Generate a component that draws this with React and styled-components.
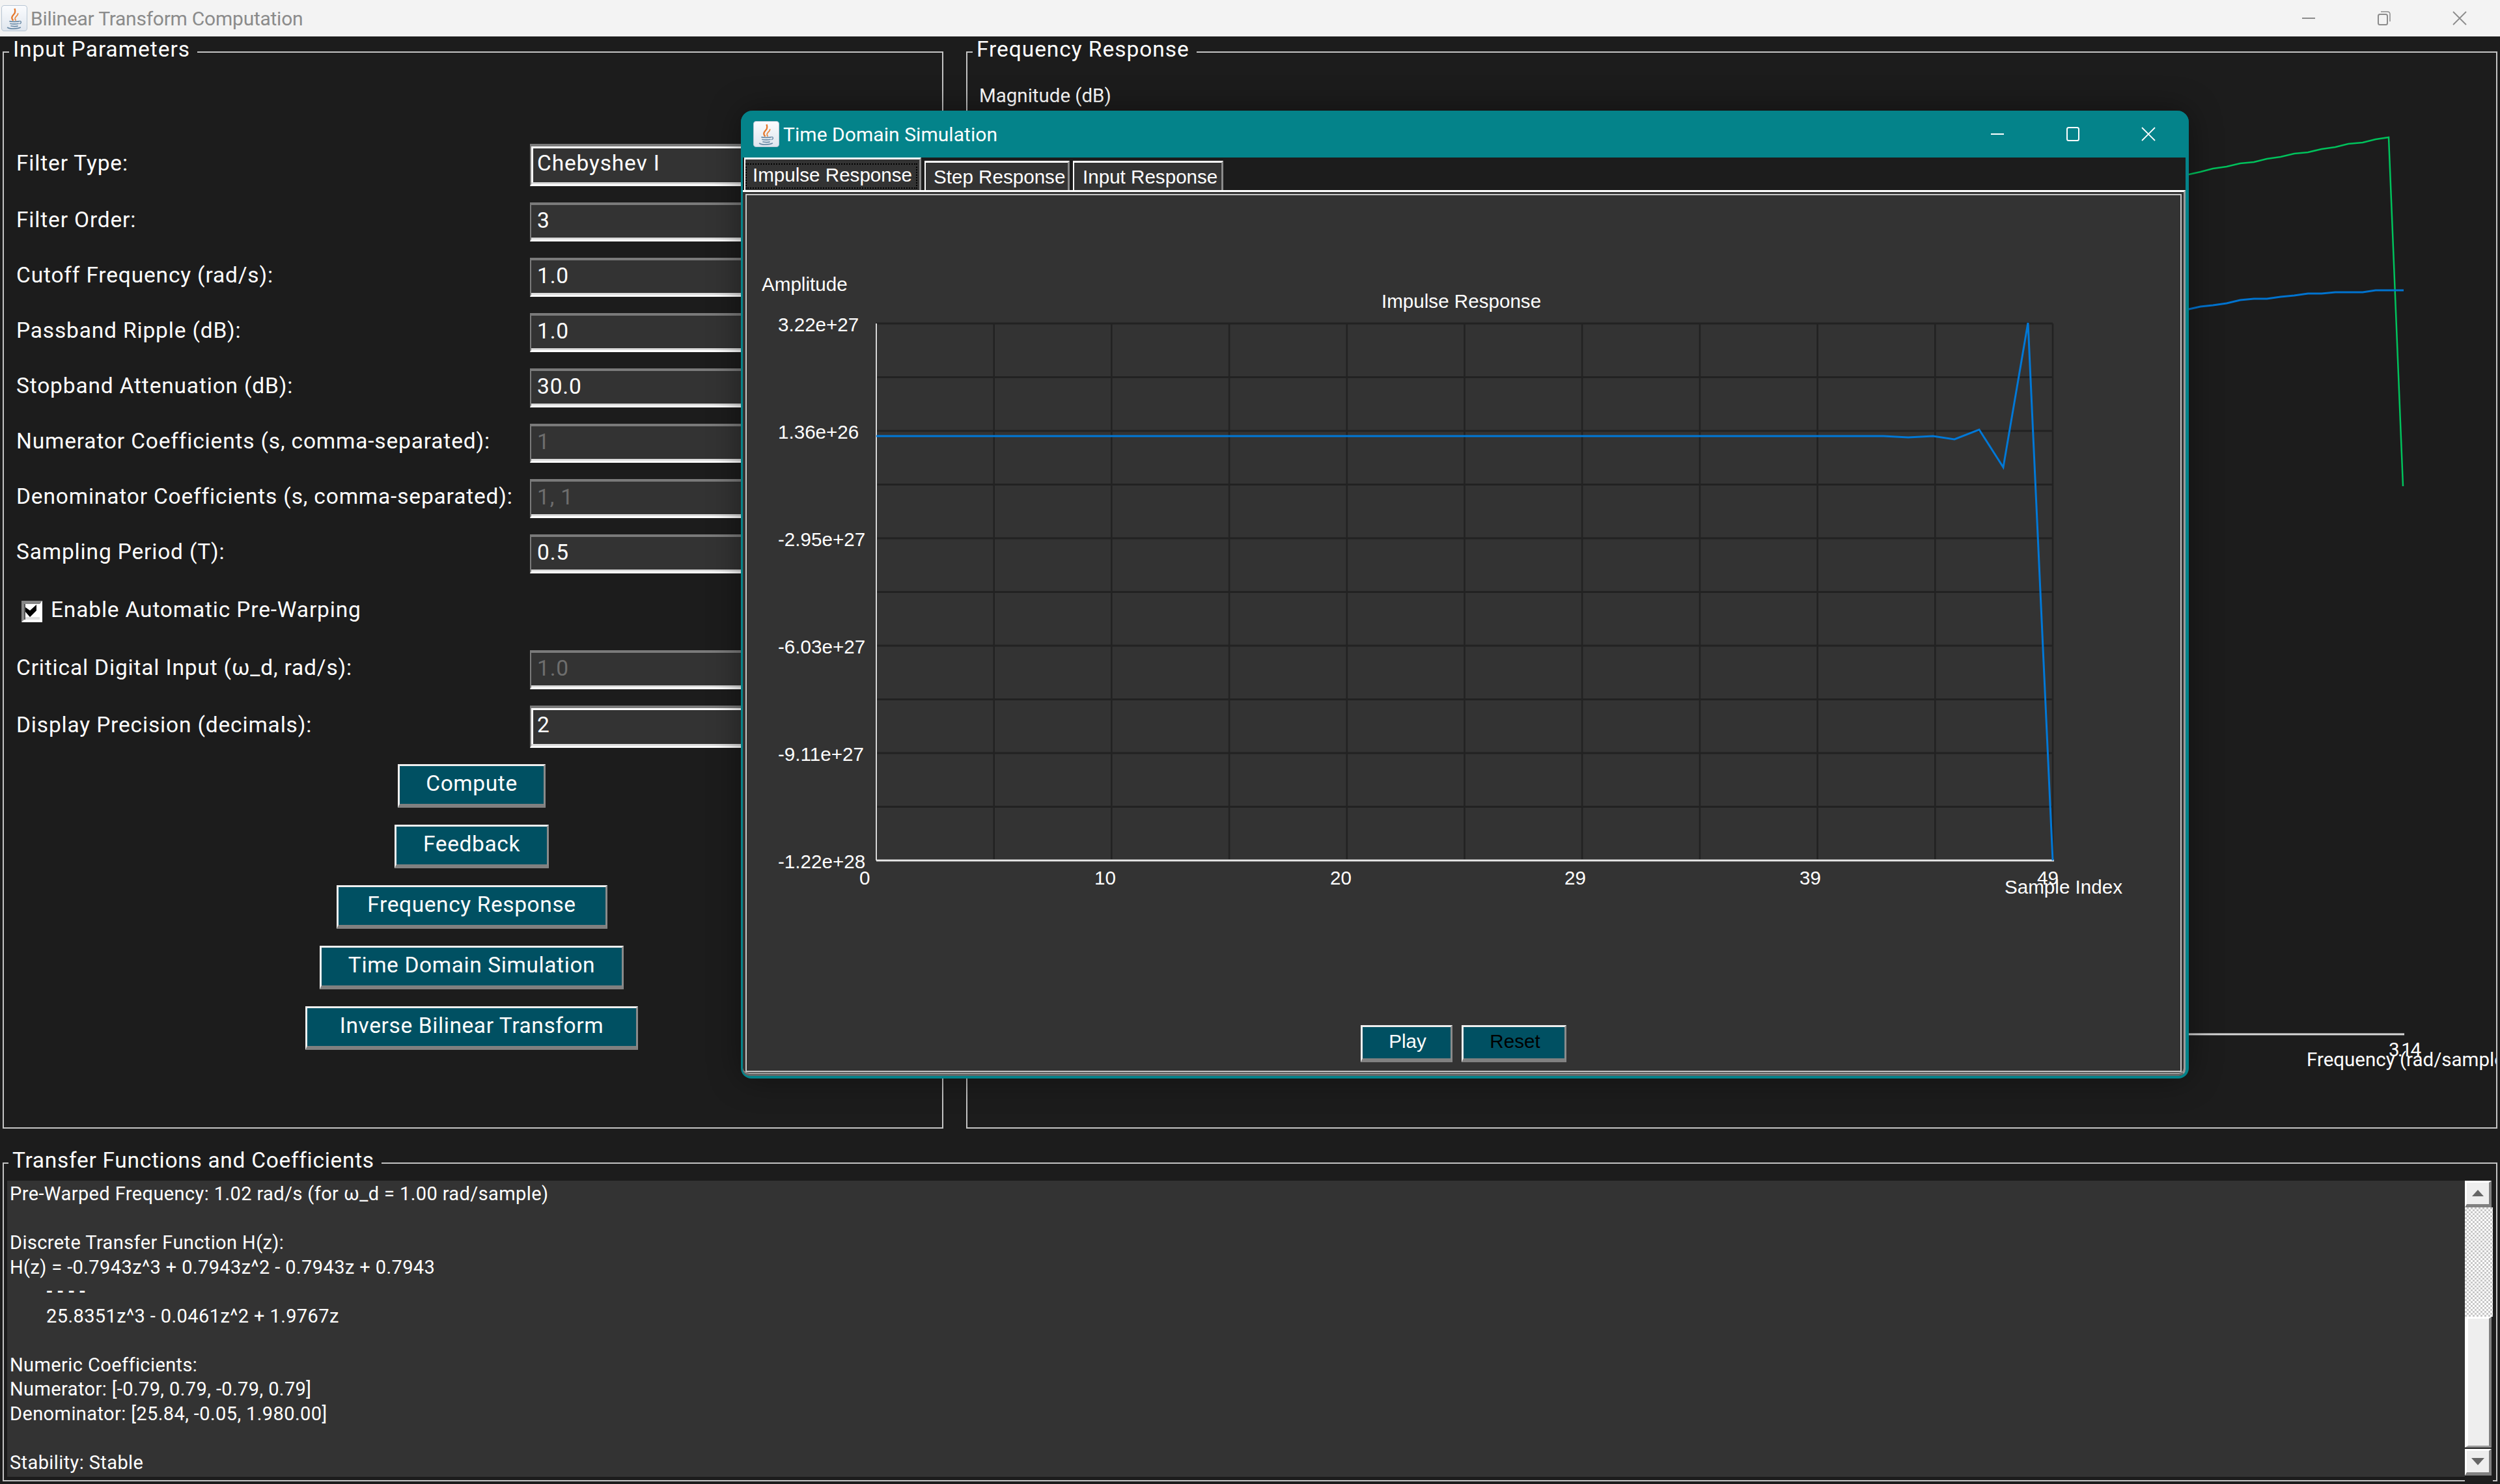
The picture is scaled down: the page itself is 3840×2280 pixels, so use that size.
import React from 'react';
import styled, {createGlobalStyle} from 'styled-components';

const UI_FONT = `Roboto, "Noto Sans", sans-serif`;
const JAVA_FONT = `"Liberation Sans", Arial, sans-serif`;

const GlobalStyle = createGlobalStyle`
  html, body {
    margin: 0;
    padding: 0;
    background: #1c1c1c;
  }
`;

const Screen = styled.div`
  position: relative;
  width: 3840px;
  height: 2280px;
  overflow: hidden;
  background: #1c1c1c;
  color: #fff;
  font-family: ${UI_FONT};
`;

const TitleBar = styled.div`
  height: 56px;
  display: flex;
  align-items: center;
  background: #f3f3f3;
  color: #8b8b8b;
  font-size: 30px;
  padding-left: 2px;
`;

const TitleText = styled.span`
  margin-left: 5px;
  flex: 1;
  letter-spacing: -0.25px;
`;

const Controls = styled.div`
  display: flex;
  align-items: center;
  gap: 94px;
  padding-right: ${p => p.$right}px;
`;

const Body = styled.div`
  padding: 4px 4px 0;
  display: flex;
  flex-direction: column;
  gap: 33px;
`;

const TopRow = styled.div`
  display: grid;
  grid-template-columns: 1445px 2352px;
  column-gap: 35px;
  height: 1674px;
`;

const Panel = styled.fieldset`
  margin: 0;
  padding: 0;
  min-width: 0;
  border: 2px solid #c4c4c4;
  height: ${p => p.$height || 1674}px;
  box-sizing: border-box;
  display: flex;
  flex-direction: column;
`;

const PanelTitle = styled.legend`
  margin-left: ${p => (p.$tight ? 7 : 8)}px;
  padding: 0 11px 0 6px;
  height: 40px;
  line-height: 31px;
  font-size: 33.5px;
  color: #fff;
  letter-spacing: ${p => (p.$tight ? 0.7 : 0.95)}px;
`;

const Form = styled.div`
  padding-top: 121px;
  display: flex;
  flex-direction: column;
  gap: 25px;
`;

const Row = styled.div`
  display: grid;
  grid-template-columns: 808px 1fr;
  align-items: center;
  height: ${p => (p.$focused ? 65 : 60)}px;
`;

const Label = styled.label`
  padding: 0 0 7px 19px;
  font-size: 33.5px;
  letter-spacing: 0.83px;
  white-space: nowrap;
`;

const CheckLabel = styled(Label)`
  padding-left: 0;
  padding-bottom: 7px;
`;

const Field = styled.input`
  box-sizing: border-box;
  width: 620px;
  height: 100%;
  padding: 0 0 7px 9px;
  background: #333;
  border-style: solid;
  border-width: 4px 0 3px 2px;
  border-color: #7a7a7a #7a7a7a #fff #7a7a7a;
  box-shadow: inset 0 -3px 0 #dcdcdc ${p => (p.$focused ? ', inset 3px 3px 0 #fff' : '')};
  color: ${p => (p.disabled ? '#6d6d6d' : '#fff')};
  -webkit-text-fill-color: ${p => (p.disabled ? '#6d6d6d' : '#fff')};
  opacity: 1;
  font-family: ${UI_FONT};
  font-size: 33.5px;
  letter-spacing: 0.83px;
  outline: none;
`;

const CheckRow = styled.div`
  height: 68px;
  display: flex;
  align-items: center;
  padding-left: 27px;
  gap: 13px;
`;

const CheckBox = styled.span`
  box-sizing: border-box;
  width: 32px;
  height: 33px;
  margin-bottom: 2px;
  padding-left: 2px;
  display: flex;
  align-items: flex-start;
  background: #e0e0e0;
  border-style: solid;
  border-width: 5px 4px 4px 4px;
  border-color: #888 #fff #fff #888;
  box-shadow: inset 2px 0 0 #555;
`;

const ButtonStack = styled.div`
  display: flex;
  flex-direction: column;
  align-items: center;
  gap: 26px;
  width: 1437px;
`;

const TealButton = styled.button`
  box-sizing: border-box;
  height: ${p => p.$height || 67}px;
  width: ${p => p.$width}px;
  padding: 0 0 5px ${p => (p.$java ? 3 : 0)}px;
  background: #005062;
  border-style: solid;
  border-width: 3px 3px 6px 3px;
  border-color: #efefef #8a8a8a #808080 #efefef;
  color: ${p => p.$ink || '#fff'};
  font-family: ${p => (p.$java ? JAVA_FONT : UI_FONT)};
  font-size: ${p => (p.$java ? 29.6 : 33.5)}px;
  letter-spacing: ${p => (p.$java ? 0 : 0.6)}px;
`;

const PlotSvg = styled.svg`
  display: block;
  flex: 1;
  min-height: 0;
`;

const PlotLabel = styled.text`
  font-family: ${UI_FONT};
  font-size: 29.5px;
  fill: #fff;
`;

const SqueezedLabel = styled(PlotLabel)`
  letter-spacing: -2.5px;
`;

const OutputPanelBody = styled.div`
  padding: 7px 5px 5px;
  display: flex;
  height: 462px;
  box-sizing: content-box;
`;

const Output = styled.div`
  flex: 1;
  background: #333;
  padding: 2px 0 0 4px;
  font-size: 29px;
  letter-spacing: 0.4px;
  line-height: 37.5px;
  white-space: pre;
  overflow: hidden;
  height: 453px;
`;

const Indented = styled.span`
  display: inline-block;
  margin-left: 56px;
`;

const Divider = styled(Indented)`
  letter-spacing: 7px;
  font-weight: 500;
`;

const ScrollBar = styled.div`
  width: 43px;
  display: flex;
  flex-direction: column;
  background: #1e1e1e;
`;

const ScrollButton = styled.div`
  box-sizing: border-box;
  width: 41px;
  height: 41px;
  display: flex;
  align-items: center;
  justify-content: center;
  background: #eee;
  border-style: solid;
  border-width: 3px 4px 5px 3px;
  border-color: #fff #808080 #808080 #fff;
  margin-top: ${p => p.$top || 0}px;
`;

const ScrollTrack = styled.div`
  height: 168px;
  background: repeating-conic-gradient(#c8c8c8 0 25%, #fff 0 50%) 0 0 / 6px 6px;
`;

const ScrollThumb = styled.div`
  box-sizing: border-box;
  width: 41px;
  height: 201px;
  background: #eee;
  border-style: solid;
  border-width: 3px 4px 3px 5px;
  border-color: #fff #808080 #999 #fff;
`;

const SimWindow = styled.div`
  position: absolute;
  left: 1138px;
  top: 170px;
  width: 2224px;
  height: 1487px;
  box-sizing: border-box;
  display: flex;
  flex-direction: column;
  background: #1c1c1c;
  border: solid #04838a;
  border-width: 0 5px 4px 3px;
  border-radius: 18px 18px 16px 16px;
  box-shadow: 0 0 50px rgba(0, 0, 0, 0.4);
`;

const SimTitle = styled.div`
  height: 72px;
  flex: none;
  display: flex;
  align-items: center;
  background: #04838a;
  margin: 0 -5px 0 -3px;
  padding-left: 19px;
  border-radius: 18px 18px 0 0;
  font-size: 30px;
  letter-spacing: 0.05px;
`;

const SimTitleText = styled.span`
  margin-left: 6px;
  flex: 1;
`;

const TabStrip = styled.div`
  height: 50px;
  flex: none;
  display: flex;
  align-items: flex-end;
  padding-left: 2px;
  gap: 5px;
`;

const Tab = styled.div`
  box-sizing: border-box;
  width: ${p => p.$width}px;
  height: ${p => (p.$active ? 50 : 45)}px;
  background: #333;
  border-style: solid;
  border-width: 3px 3px 0 2px;
  border-color: #fff #8a8a8a #333 #fff;
  font-family: ${JAVA_FONT};
  font-size: 29.6px;
  line-height: 43px;
  padding-left: ${p => p.$inset || 0}px;
  white-space: nowrap;
`;

const FocusMark = styled.div`
  box-sizing: border-box;
  width: calc(100% - 3px);
  height: 39px;
  margin-top: 6px;
  padding-left: 3px;
  border: 2px dotted #000;
  line-height: 31px;
  text-align: center;
`;

const PaneFrame = styled.div`
  flex: 1;
  min-height: 0;
  display: flex;
  box-sizing: border-box;
  border-top: 3px solid #fff;
  border-right: 3px solid #9a9a9a;
  border-bottom: 3px solid #666;
  border-radius: 0 0 10px 10px;
  padding: 3px 3px 0 4px;
  background: #333;
  box-shadow: inset 0 -2px 0 #9a9a9a;
`;

const Pane = styled.div`
  flex: 1;
  min-width: 0;
  display: flex;
  flex-direction: column;
  border: 2px solid #c8c8c8;
  margin-bottom: 3px;
  background: #333;
`;

const PlayBar = styled.div`
  flex: none;
  display: flex;
  justify-content: center;
  gap: 14px;
  padding-bottom: 13px;
`;

const ChartLabel = styled.text`
  font-family: ${JAVA_FONT};
  font-size: 29.6px;
  fill: #fff;
`;

const JavaIcon = () => (
  <svg width="40" height="40" viewBox="0 0 39 39">
    <defs>
      <linearGradient id="tile" x1="0" y1="0" x2="0" y2="1">
        <stop offset="0" stopColor="#fbfcfe" />
        <stop offset="1" stopColor="#dfe6ee" />
      </linearGradient>
    </defs>
    <rect x="0.500" y="0.500" width="38" height="38" rx="4" fill="url(#tile)" stroke="#b8c6d4" strokeWidth="1" />
    <path d="M18 23c-5-5 0-8 2-11 1-2 1-4 0-7" fill="none" stroke="#e5762a" strokeWidth="2.200" />
    <path d="M22 23c-3-3-1-5 2-8 1-1 1-2 1-3" fill="none" stroke="#e98a45" strokeWidth="1.800" />
    <path d="M12 24c3 1 12 1 15 0M13 27.500c3 1 10 1 13 0M14 31c3 1 9 1 11 0" fill="none" stroke="#6a8aa6" strokeWidth="1.700" />
    <path d="M27 24c3-1 4 3 0 4" fill="none" stroke="#6a8aa6" strokeWidth="1.300" />
    <path d="M9 33c3 3 16 3 20 0" fill="none" stroke="#6a8aa6" strokeWidth="1.800" />
  </svg>
);

const Minimize = ({color}) => (
  <svg width="22" height="22" viewBox="0 0 22 22"><path d="M1 11h20" stroke={color} strokeWidth="2" /></svg>
);

const Maximize = ({color}) => (
  <svg width="22" height="22" viewBox="0 0 22 22"><rect x="2" y="1" width="18" height="20" rx="2.500" fill="none" stroke={color} strokeWidth="2" /></svg>
);

const Restore = ({color}) => (
  <svg width="22" height="22" viewBox="0 0 22 22">
    <rect x="2" y="5" width="14" height="16" rx="2.500" fill="none" stroke={color} strokeWidth="2" />
    <path d="M6 1h10c3 0 4 1 4 4v11" fill="none" stroke={color} strokeWidth="1.500" />
  </svg>
);

const Close = ({color}) => (
  <svg width="22" height="22" viewBox="0 0 22 22"><path d="M1 1l20 20M21 1L1 21" stroke={color} strokeWidth="1.800" /></svg>
);

const ArrowIcon = ({down}) => (
  <svg width="20" height="11" viewBox="0 0 20 11">
    <path d={down ? 'M0 0h20L10 11z' : 'M10 0l9 10H1z'} fill="#666" />
  </svg>
);

const CheckMark = () => (
  <svg width="22" height="20" viewBox="0 0 22 20">
    <rect width="22" height="20" fill="#fff" />
    <path d="M0 5l7 5 10-9v9L7 20 0 12z" fill="#000" />
  </svg>
);

const fields = [
  {label: 'Filter Type:', value: 'Chebyshev I', focused: true},
  {label: 'Filter Order:', value: '3'},
  {label: 'Cutoff Frequency (rad/s):', value: '1.0'},
  {label: 'Passband Ripple (dB):', value: '1.0'},
  {label: 'Stopband Attenuation (dB):', value: '30.0'},
  {label: 'Numerator Coefficients (s, comma-separated):', value: '1', disabled: true},
  {label: 'Denominator Coefficients (s, comma-separated):', value: '1, 1', disabled: true},
  {label: 'Sampling Period (T):', value: '0.5'},
];

const actions = [
  {text: 'Compute', width: 227},
  {text: 'Feedback', width: 237},
  {text: 'Frequency Response', width: 416},
  {text: 'Time Domain Simulation', width: 467},
  {text: 'Inverse Bilinear Transform', width: 511},
];

const greenTrace = '3340,274 3362,268 3380,264 3399,259 3420,256 3441,251 3462,249 3482,244 3503,241 3524,236 3545,234 3566,229 3587,226 3607,221 3629,219 3649,214 3669,211 3691,747';
const blueTrace = '3340,481 3362,475 3380,471 3399,469 3420,466 3441,461 3462,459 3482,459 3503,456 3524,454 3545,451 3566,451 3587,449 3629,449 3649,446 3692,446';
const impulseTrace = '1346,670 2893,670 2931,672 2969,670 3002,675 3040,660 3077,718 3115,496 3153,1322';

// chart coordinates are page pixels, the viewBox maps them onto the pane
const plotLeft = 1346;
const plotRight = 3153;
const plotTop = 497;
const plotBottom = 1322;
const columns = Array.from({length: 11}, (_, i) => plotLeft + (i * (plotRight - plotLeft)) / 10);
const rows = Array.from({length: 11}, (_, i) => plotTop + (i * (plotBottom - plotTop)) / 10);

const yTicks = [
  {text: '3.22e+27', y: 509},
  {text: '1.36e+26', y: 674},
  {text: '-2.95e+27', y: 839},
  {text: '-6.03e+27', y: 1004},
  {text: '-9.11e+27', y: 1169},
  {text: '-1.22e+28', y: 1334},
];

const xTicks = [
  {text: '0', x: 1320},
  {text: '10', x: 1681},
  {text: '20', x: 2043},
  {text: '29', x: 2403},
  {text: '39', x: 2764},
  {text: '49', x: 3129},
];

const App = () => (
  <Screen>
    <GlobalStyle />
    <TitleBar>
      <JavaIcon />
      <TitleText>Bilinear Transform Computation</TitleText>
      <Controls $right={51}>
        <Minimize color="#8b8b8b" />
        <Restore color="#8b8b8b" />
        <Close color="#8b8b8b" />
      </Controls>
    </TitleBar>

    <Body>
      <TopRow>
        <Panel>
          <PanelTitle>Input Parameters</PanelTitle>
          <Form>
            {fields.map(f => (
              <Row key={f.label} $focused={f.focused}>
                <Label>{f.label}</Label>
                <Field readOnly value={f.value} disabled={f.disabled} $focused={f.focused} />
              </Row>
            ))}
            <CheckRow>
              <CheckBox><CheckMark /></CheckBox>
              <CheckLabel as="span">Enable Automatic Pre-Warping</CheckLabel>
            </CheckRow>
            <Row>
              <Label>Critical Digital Input (ω_d, rad/s):</Label>
              <Field readOnly disabled value="1.0" />
            </Row>
            <Row $focused>
              <Label>Display Precision (decimals):</Label>
              <Field readOnly value="2" $focused />
            </Row>
            <ButtonStack>
              {actions.map(a => (
                <TealButton key={a.text} $width={a.width}>{a.text}</TealButton>
              ))}
            </ButtonStack>
          </Form>
        </Panel>

        <Panel>
          <PanelTitle>Frequency Response</PanelTitle>
          <PlotSvg viewBox="1486 100 2348 1632" width="2348" height="1632">
            <PlotLabel x="1504" y="157">Magnitude (dB)</PlotLabel>
            <polyline points={greenTrace} fill="none" stroke="#00c25c" strokeWidth="2.500" />
            <polyline points={blueTrace} fill="none" stroke="#0073cf" strokeWidth="3" />
            <path d="M3340 1589H3693" stroke="#d8d8d8" strokeWidth="3" />
            <SqueezedLabel x="3669" y="1623">3.14</SqueezedLabel>
            <PlotLabel x="3543" y="1638">Frequency (rad/sample)</PlotLabel>
          </PlotSvg>
        </Panel>
      </TopRow>

      <Panel $height={509}>
        <PanelTitle $tight>Transfer Functions and Coefficients</PanelTitle>
        <OutputPanelBody>
          <Output>
            {'Pre-Warped Frequency: 1.02 rad/s (for ω_d = 1.00 rad/sample)\n\nDiscrete Transfer Function H(z):\nH(z) = -0.7943z^3 + 0.7943z^2 - 0.7943z + 0.7943\n'}
            <Divider>----</Divider>
            {'\n'}
            <Indented>25.8351z^3 - 0.0461z^2 + 1.9767z</Indented>
            {'\n\nNumeric Coefficients:\nNumerator: [-0.79, 0.79, -0.79, 0.79]\nDenominator: [25.84, -0.05, 1.980.00]\n\nStability: Stable'}
          </Output>
          <ScrollBar>
            <ScrollButton><ArrowIcon /></ScrollButton>
            <ScrollTrack />
            <ScrollThumb />
            <ScrollButton $top={2}><ArrowIcon down /></ScrollButton>
          </ScrollBar>
        </OutputPanelBody>
      </Panel>
    </Body>

    <SimWindow>
      <SimTitle>
        <JavaIcon />
        <SimTitleText>Time Domain Simulation</SimTitleText>
        <Controls $right={51}>
          <Minimize color="#fff" />
          <Maximize color="#fff" />
          <Close color="#fff" />
        </Controls>
      </SimTitle>
      <TabStrip>
        <Tab $active $width={272}><FocusMark>Impulse Response</FocusMark></Tab>
        <Tab $width={223} $inset={12}>Step Response</Tab>
        <Tab $width={231} $inset={13}>Input Response</Tab>
      </TabStrip>
      <PaneFrame>
        <Pane>
          <PlotSvg viewBox="1147 300 2203 1275" width="2203" height="1275">
            {columns.map(x => (
              <path key={x} d={`M${x} ${plotTop}V${plotBottom}`} stroke="#222" strokeWidth="2.500" />
            ))}
            {rows.map(y => (
              <path key={y} d={`M${plotLeft} ${y}H${plotRight}`} stroke="#222" strokeWidth="3" />
            ))}
            <path d={`M${plotLeft} ${plotTop}V${plotBottom}`} stroke="#d8d8d8" strokeWidth="2" />
            <path d={`M${plotLeft} ${plotBottom}H${plotRight + 2}`} stroke="#e8e8e8" strokeWidth="3" />
            <polyline points={impulseTrace} fill="none" stroke="#0078d7" strokeWidth="3" />
            <ChartLabel x="1170" y="447">Amplitude</ChartLabel>
            <ChartLabel x="2122" y="473">Impulse Response</ChartLabel>
            {yTicks.map(t => (
              <ChartLabel key={t.text} x="1195" y={t.y}>{t.text}</ChartLabel>
            ))}
            {xTicks.map(t => (
              <ChartLabel key={t.text} x={t.x} y="1359">{t.text}</ChartLabel>
            ))}
            <ChartLabel x="3079" y="1373">Sample Index</ChartLabel>
          </PlotSvg>
          <PlayBar>
            <TealButton $java $width={141} $height={57}>Play</TealButton>
            <TealButton $java $width={161} $height={57} $ink="#000">Reset</TealButton>
          </PlayBar>
        </Pane>
      </PaneFrame>
    </SimWindow>
  </Screen>
);

export default App;
